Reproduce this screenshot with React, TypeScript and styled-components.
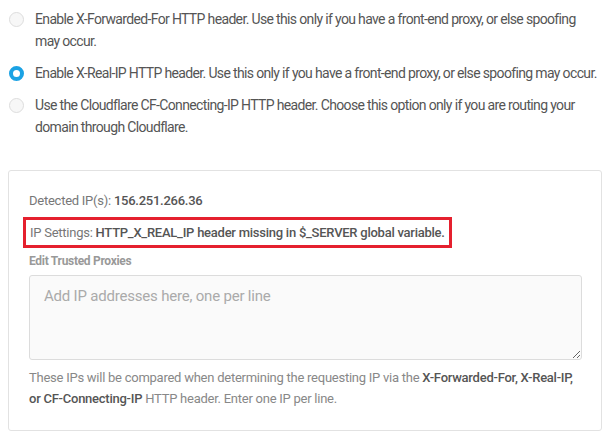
import styled, { createGlobalStyle } from "styled-components";

const GlobalStyle = createGlobalStyle`
    html, body {
        margin: 0;
        padding: 0;
        background: #ffffff;
    }
    body {
        font-family: Roboto, "Liberation Sans", Arial, sans-serif;
        color: #555;
    }
    * {
        box-sizing: border-box;
    }
`;

interface OptionProps {
    checked?: boolean;
    label: string;
}

// "may occur." is kept together so the first option wraps as in the design
const options: OptionProps[] = [
    {
        label: "Enable X-Forwarded-For HTTP header. Use this only if you have a front-end proxy, or else spoofing may\u00a0occur.",
    },
    {
        checked: true,
        label: "Enable X-Real-IP HTTP header. Use this only if you have a front-end proxy, or else spoofing may occur.",
    },
    {
        label: "Use the Cloudflare CF-Connecting-IP HTTP header. Choose this option only if you are routing your domain through Cloudflare.",
    },
];

const RadioOption = ({ checked, label }: OptionProps) => {
    return (
        <StyledOption>
            <StyledRadio checked={!!checked} />
            <span>{label}</span>
        </StyledOption>
    );
};

const App = () => {
    return (
        <>
            <GlobalStyle />
            <StyledPage>
                <StyledOptions>
                    {options.map((opt, i) => (
                        <RadioOption key={i} {...opt} />
                    ))}
                </StyledOptions>

                <StyledPanel>
                    <StyledDetected>
                        Detected IP(s): <strong>156.251.266.36</strong>
                    </StyledDetected>
                    <StyledNotice>
                        IP Settings: <strong>HTTP_X_REAL_IP header missing in $_SERVER global variable.</strong>
                    </StyledNotice>
                    <StyledLabel>Edit Trusted Proxies</StyledLabel>
                    <StyledTextarea placeholder="Add IP addresses here, one per line" />
                    <StyledHelp>
                        These IPs will be compared when determining the requesting IP via the{" "}
                        <strong>X-Forwarded-For, X-Real-IP, or CF-Connecting-IP</strong> HTTP header. Enter one IP per
                        line.
                    </StyledHelp>
                </StyledPanel>
            </StyledPage>
        </>
    );
};

const StyledPage = styled.div`
    width: 610px;
    padding: 8px 6px 0 8px;
`;

const StyledOptions = styled.div`
    display: flex;
    flex-direction: column;
    gap: 10px;
    padding-bottom: 32px;
`;

const StyledOption = styled.label`
    display: flex;
    align-items: flex-start;
    gap: 11px;
    font-size: 14px;
    line-height: 22px;
    letter-spacing: -0.65px;
    color: #555;
    padding-left: 1px;
`;

const StyledRadio = styled.span<{ checked: boolean }>`
    flex: none;
    width: 15px;
    height: 15px;
    margin-top: 4px;
    border-radius: 50%;
    background: ${(p) => (p.checked ? "#ffffff" : "#f7f7f7")};
    border: ${(p) => (p.checked ? "4px solid #1ba2e4" : "1px solid #dddddd")};
`;

const StyledPanel = styled.div`
    border: 1px solid #e2e2e2;
    border-radius: 3px;
    margin-right: 2px;
    padding: 19px 20px 21px 20px;
    display: flex;
    flex-direction: column;
    color: #777;
    font-size: 13px;
    letter-spacing: -0.25px;

    strong {
        font-weight: 500;
        color: #555;
    }
`;

const StyledDetected = styled.div`
    line-height: 22px;
    margin-bottom: 5px;
`;

const StyledNotice = styled.div`
    line-height: 19px;
    border: 3px solid #e5202e;
    padding: 3px 4px;
    margin-left: -6px;
    align-self: flex-start;
`;

const StyledLabel = styled.div`
    font-size: 12px;
    font-weight: 700;
    color: #999;
    line-height: 16px;
    letter-spacing: -0.3px;
    margin: 5px 0 6px 0;
`;

const StyledTextarea = styled.textarea`
    display: block;
    width: 553px;
    height: 85px;
    border: 1px solid #dcdcdc;
    border-radius: 3px;
    background: #fafafa;
    padding: 8px 14px;
    font-family: Roboto, "Liberation Sans", Arial, sans-serif;
    font-size: 15px;
    line-height: 24px;
    letter-spacing: -0.2px;
    color: #555;
    resize: vertical;

    &::placeholder {
        color: #aaa;
    }
`;

const StyledHelp = styled.p`
    margin: 7px 0 0 0;
    font-size: 13px;
    line-height: 21px;
    color: #888;
    letter-spacing: -0.25px;
`;

export default App;
